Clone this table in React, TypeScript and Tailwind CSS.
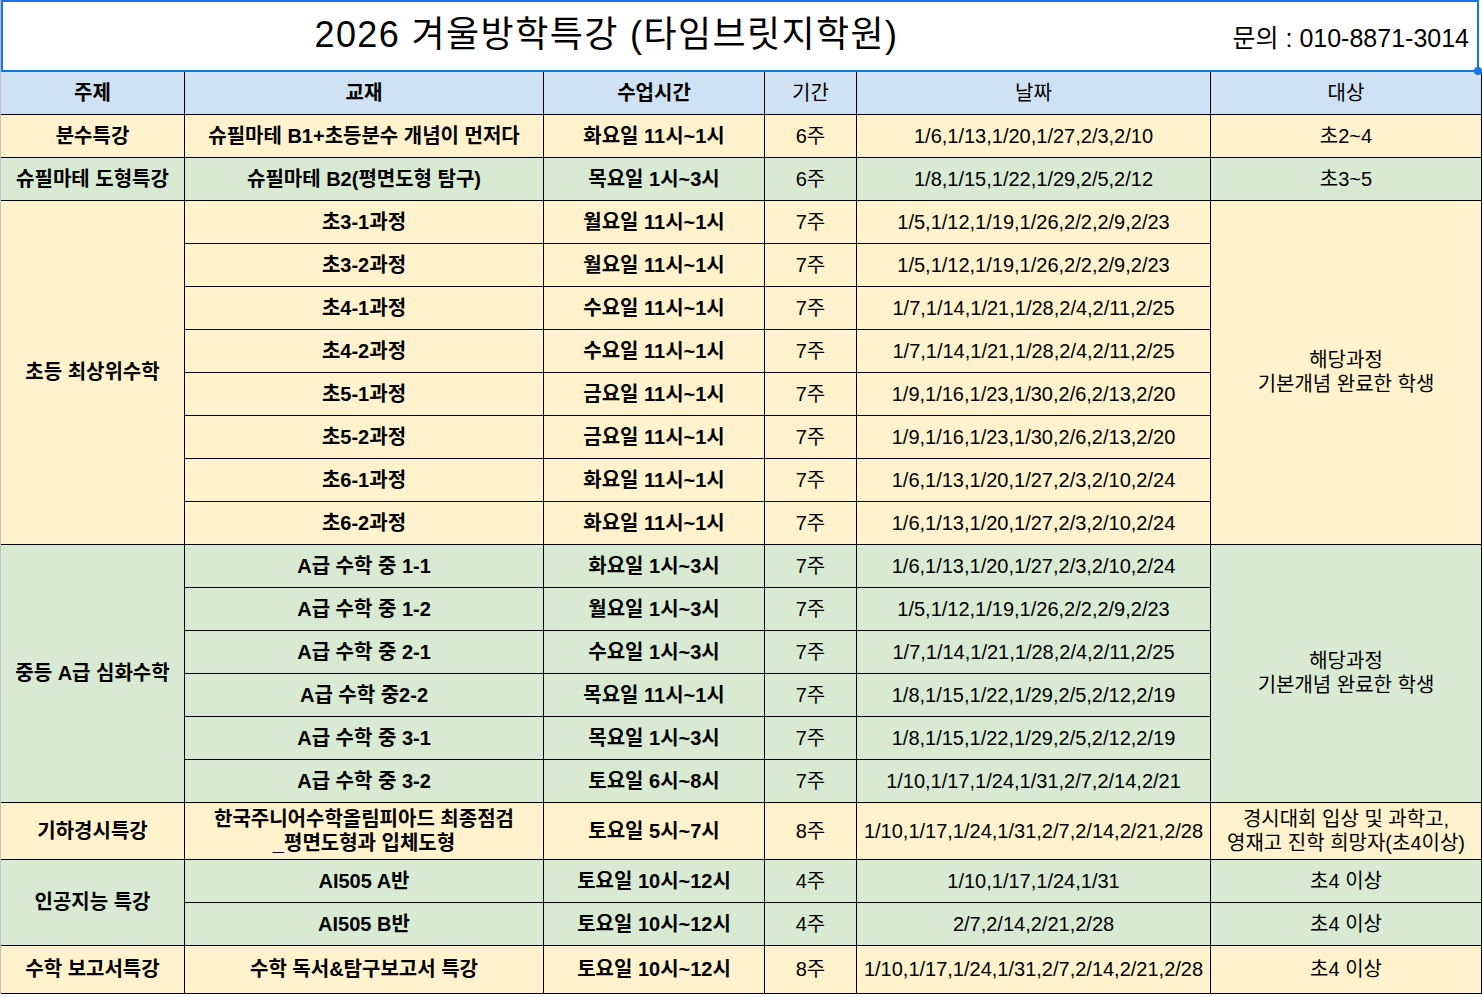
import React from "react";

const Y = "bg-[#fff2cc]";
const G = "bg-[#d9ead3]";

type R = { book: string; time: string; dur: string; dates: string };

const cell = "flex items-center justify-center text-center leading-[24px] whitespace-pre-line pb-[1px]";
const bold = "font-bold";

function Row({ r, bg }: { r: R; bg: string }) {
  return (
    <>
      <div className={`${cell} ${bold} ${bg}`}>{r.book}</div>
      <div className={`${cell} ${bold} ${bg}`}>{r.time}</div>
      <div className={`${cell} ${bg}`}>{r.dur}</div>
      <div className={`${cell} ${bg}`}>{r.dates}</div>
    </>
  );
}

const elem: R[] = [
  { book: "초3-1과정", time: "월요일 11시~1시", dur: "7주", dates: "1/5,1/12,1/19,1/26,2/2,2/9,2/23" },
  { book: "초3-2과정", time: "월요일 11시~1시", dur: "7주", dates: "1/5,1/12,1/19,1/26,2/2,2/9,2/23" },
  { book: "초4-1과정", time: "수요일 11시~1시", dur: "7주", dates: "1/7,1/14,1/21,1/28,2/4,2/11,2/25" },
  { book: "초4-2과정", time: "수요일 11시~1시", dur: "7주", dates: "1/7,1/14,1/21,1/28,2/4,2/11,2/25" },
  { book: "초5-1과정", time: "금요일 11시~1시", dur: "7주", dates: "1/9,1/16,1/23,1/30,2/6,2/13,2/20" },
  { book: "초5-2과정", time: "금요일 11시~1시", dur: "7주", dates: "1/9,1/16,1/23,1/30,2/6,2/13,2/20" },
  { book: "초6-1과정", time: "화요일 11시~1시", dur: "7주", dates: "1/6,1/13,1/20,1/27,2/3,2/10,2/24" },
  { book: "초6-2과정", time: "화요일 11시~1시", dur: "7주", dates: "1/6,1/13,1/20,1/27,2/3,2/10,2/24" },
];

const mid: R[] = [
  { book: "A급 수학 중 1-1", time: "화요일 1시~3시", dur: "7주", dates: "1/6,1/13,1/20,1/27,2/3,2/10,2/24" },
  { book: "A급 수학 중 1-2", time: "월요일 1시~3시", dur: "7주", dates: "1/5,1/12,1/19,1/26,2/2,2/9,2/23" },
  { book: "A급 수학 중 2-1", time: "수요일 1시~3시", dur: "7주", dates: "1/7,1/14,1/21,1/28,2/4,2/11,2/25" },
  { book: "A급 수학 중2-2", time: "목요일 11시~1시", dur: "7주", dates: "1/8,1/15,1/22,1/29,2/5,2/12,2/19" },
  { book: "A급 수학 중 3-1", time: "목요일 1시~3시", dur: "7주", dates: "1/8,1/15,1/22,1/29,2/5,2/12,2/19" },
  { book: "A급 수학 중 3-2", time: "토요일 6시~8시", dur: "7주", dates: "1/10,1/17,1/24,1/31,2/7,2/14,2/21" },
];

export default function App() {
  return (
    <div
      className="w-[1482px] bg-white text-black text-[20px]"
      style={{ fontFamily: '"Liberation Sans", "Noto Sans CJK KR", Arial, sans-serif' }}
    >
      {/* Title */}
      <div className="h-[72px] flex border-l border-[#c0c0c0] pr-[3px] bg-white">
        <div className="relative flex-1 h-[72px] border-2 border-[#1a73e8] flex">
          <div className="w-[1207px] flex items-center justify-center pb-[3px]">
            <span className="text-[36px] leading-[40px] tracking-[1.4px]">2026 겨울방학특강 (타임브릿지학원)</span>
          </div>
          <div className="flex-1 flex items-center justify-end pr-[8px] pt-[3px]">
            <span className="text-[25px] leading-[28px]">문의 : 010-8871-3014</span>
          </div>
          <div className="absolute -right-[5px] -bottom-[5px] w-[8px] h-[8px] rounded-full bg-[#1a73e8] z-10" />
        </div>
      </div>

      {/* Table */}
      <div className="border-l border-[#c0c0c0]">
        <div className="grid grid-cols-[183px_358px_220px_91px_353px_270px] grid-rows-[42px_repeat(16,42px)_56px_42px_42px_47px] gap-px bg-black pr-px pb-px">
          {/* header */}
          <div className={`${cell} ${bold} bg-[#cfe2f3]`}>주제</div>
          <div className={`${cell} ${bold} bg-[#cfe2f3]`}>교재</div>
          <div className={`${cell} ${bold} bg-[#cfe2f3]`}>수업시간</div>
          <div className={`${cell} bg-[#cfe2f3]`}>기간</div>
          <div className={`${cell} bg-[#cfe2f3]`}>날짜</div>
          <div className={`${cell} bg-[#cfe2f3]`}>대상</div>

          {/* 분수특강 */}
          <div className={`${cell} ${bold} ${Y}`}>분수특강</div>
          <Row r={{ book: "슈필마테 B1+초등분수 개념이 먼저다", time: "화요일 11시~1시", dur: "6주", dates: "1/6,1/13,1/20,1/27,2/3,2/10" }} bg={Y} />
          <div className={`${cell} ${Y}`}>초2~4</div>

          {/* 슈필마테 도형특강 */}
          <div className={`${cell} ${bold} ${G}`}>슈필마테 도형특강</div>
          <Row r={{ book: "슈필마테 B2(평면도형 탐구)", time: "목요일 1시~3시", dur: "6주", dates: "1/8,1/15,1/22,1/29,2/5,2/12" }} bg={G} />
          <div className={`${cell} ${G}`}>초3~5</div>

          {/* 초등 최상위수학 */}
          <div className={`${cell} ${bold} ${Y} row-span-8`}>초등 최상위수학</div>
          <Row r={elem[0]} bg={Y} />
          <div className={`${cell} ${Y} row-span-8`}>{"해당과정\n기본개념 완료한 학생"}</div>
          {elem.slice(1).map((r, i) => (
            <Row key={i} r={r} bg={Y} />
          ))}

          {/* 중등 A급 심화수학 */}
          <div className={`${cell} ${bold} ${G} row-span-6`}>중등 A급 심화수학</div>
          <Row r={mid[0]} bg={G} />
          <div className={`${cell} ${G} row-span-6`}>{"해당과정\n기본개념 완료한 학생"}</div>
          {mid.slice(1).map((r, i) => (
            <Row key={i} r={r} bg={G} />
          ))}

          {/* 기하경시특강 */}
          <div className={`${cell} ${bold} ${Y}`}>기하경시특강</div>
          <Row
            r={{
              book: "한국주니어수학올림피아드 최종점검\n_평면도형과 입체도형",
              time: "토요일 5시~7시",
              dur: "8주",
              dates: "1/10,1/17,1/24,1/31,2/7,2/14,2/21,2/28",
            }}
            bg={Y}
          />
          <div className={`${cell} ${Y}`}>{"경시대회 입상 및 과학고,\n영재고 진학 희망자(초4이상)"}</div>

          {/* 인공지능 특강 */}
          <div className={`${cell} ${bold} ${G} row-span-2`}>인공지능 특강</div>
          <Row r={{ book: "AI505 A반", time: "토요일 10시~12시", dur: "4주", dates: "1/10,1/17,1/24,1/31" }} bg={G} />
          <div className={`${cell} ${G}`}>초4 이상</div>
          <Row r={{ book: "AI505 B반", time: "토요일 10시~12시", dur: "4주", dates: "2/7,2/14,2/21,2/28" }} bg={G} />
          <div className={`${cell} ${G}`}>초4 이상</div>

          {/* 수학 보고서특강 */}
          <div className={`${cell} ${bold} ${Y}`}>수학 보고서특강</div>
          <Row
            r={{ book: "수학 독서&탐구보고서 특강", time: "토요일 10시~12시", dur: "8주", dates: "1/10,1/17,1/24,1/31,2/7,2/14,2/21,2/28" }}
            bg={Y}
          />
          <div className={`${cell} ${Y}`}>초4 이상</div>
        </div>
      </div>
    </div>
  );
}
